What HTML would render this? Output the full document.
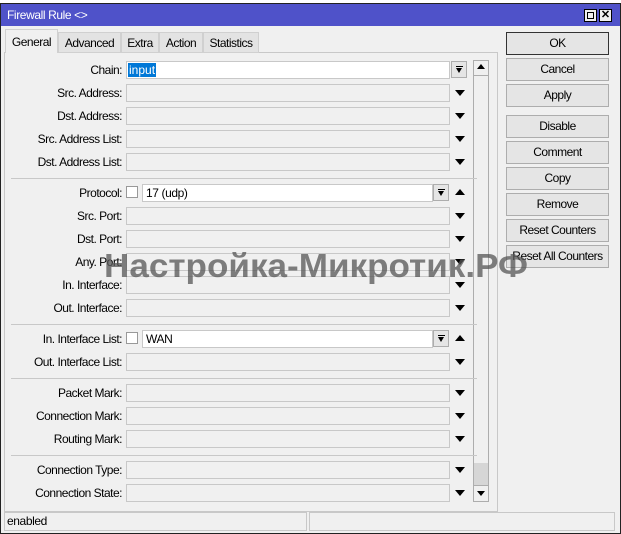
<!DOCTYPE html>
<html><head><meta charset="utf-8"><style>
*{box-sizing:border-box;margin:0;padding:0}
body{width:621px;height:534px;background:#f0f0f0;font-family:"Liberation Sans",Arial,sans-serif;font-size:12px;color:#000;position:relative;overflow:hidden}
.a{position:absolute}
.lbl{position:absolute;right:499px;text-align:right;white-space:nowrap;letter-spacing:-0.5px}
.f{position:absolute;left:126px;width:324px;height:18px;border:1px solid #c8c8c8;background:#f0f0f0}
.dn{position:absolute;left:455px;width:0;height:0;border-left:5px solid transparent;border-right:5px solid transparent;border-top:6px solid #000}
.up{position:absolute;left:455px;width:0;height:0;border-left:5px solid transparent;border-right:5px solid transparent;border-bottom:6px solid #000}
.sep{position:absolute;left:11px;width:466px;height:1px;background:#c8c8c8}
.btn{position:absolute;left:506px;width:103px;height:23px;border:1px solid #adadad;background:#e5e5e5;text-align:center;line-height:21px;letter-spacing:-0.5px}
.tab{position:absolute;top:32px;height:21px;border:1px solid #d0d0d0;background:#e3e3e3;line-height:20px;text-align:center;letter-spacing:-0.5px}
.cb{position:absolute;left:126px;width:12px;height:12px;border:1px solid #999;background:#fff}
.dd{position:absolute;width:16px;height:17px;border:1px solid #adadad;background:#e5e5e5}
.dd:before{content:"";position:absolute;left:4px;top:4px;width:7px;height:1px;background:#000}
.dd:after{content:"";position:absolute;left:4px;top:6px;width:0;height:0;border-left:3.5px solid transparent;border-right:3.5px solid transparent;border-top:5px solid #000}
</style></head><body>
<div class="a" style="left:0;top:0;width:621px;height:4px;background:#fff"></div>
<div class="a" style="left:0;top:3px;width:621px;height:531px;border:1px solid #222;background:#f0f0f0"></div>
<div class="a" style="left:1px;top:4px;width:619px;height:22px;background:#4f52c9;color:#fff;font-size:12px;line-height:22px;padding-left:6px;letter-spacing:-0.4px">Firewall Rule &lt;&gt;</div>
<div class="a" style="left:584px;top:9px;width:13px;height:13px;background:#f0f0f0;border:1px solid #000"><div class="a" style="left:2px;top:2px;width:7px;height:7px;border:1px solid #000"></div></div>
<div class="a" style="left:599px;top:9px;width:13px;height:13px;background:#f0f0f0;border:1px solid #000;font-size:11px;line-height:11px;text-align:center;font-weight:bold">✕</div>

<div class="a" style="left:4px;top:52px;width:494px;height:460px;border:1px solid #c8c8c8;background:#f0f0f0"></div>
<div class="tab" style="left:5px;top:29px;width:53px;height:24px;background:#f0f0f0;border-bottom:none;line-height:24px">General</div>
<div class="tab" style="left:58px;width:63px">Advanced</div>
<div class="tab" style="left:121px;width:38px">Extra</div>
<div class="tab" style="left:159px;width:44px">Action</div>
<div class="tab" style="left:203px;width:56px">Statistics</div>

<div class="a" style="left:473px;top:60px;width:16px;height:442px;border:1px solid #adadad;background:#f0f0f0"></div>
<div class="a" style="left:474px;top:463px;width:14px;height:22px;background:#d6d6d6"></div>
<div class="a" style="left:477px;top:64px;width:0;height:0;border-left:4px solid transparent;border-right:4px solid transparent;border-bottom:5px solid #000"></div>
<div class="a" style="left:473px;top:75px;width:16px;height:1px;background:#adadad"></div>
<div class="a" style="left:473px;top:485px;width:16px;height:1px;background:#adadad"></div>
<div class="a" style="left:477px;top:491px;width:0;height:0;border-left:4px solid transparent;border-right:4px solid transparent;border-top:5px solid #000"></div>

<div class="lbl" style="top:63px">Chain:</div>
<div class="f" style="top:61px;background:#fff;width:324px"><span style="background:#0078d7;color:#fff;padding:0 1px;position:absolute;left:1px;top:1px;line-height:14px">input</span></div>
<div class="dd" style="top:61px;left:451px"></div>
<div class="lbl" style="top:86px">Src. Address:</div><div class="f" style="top:84px"></div><div class="dn" style="top:90px"></div>
<div class="lbl" style="top:109px">Dst. Address:</div><div class="f" style="top:107px"></div><div class="dn" style="top:113px"></div>
<div class="lbl" style="top:132px">Src. Address List:</div><div class="f" style="top:130px"></div><div class="dn" style="top:136px"></div>
<div class="lbl" style="top:155px">Dst. Address List:</div><div class="f" style="top:153px"></div><div class="dn" style="top:159px"></div>
<div class="sep" style="top:178px"></div>

<div class="lbl" style="top:186px">Protocol:</div><div class="cb" style="top:186px"></div>
<div class="f" style="top:184px;left:142px;width:291px;background:#fff;padding-left:3px;line-height:16px;letter-spacing:-0.4px">17 (udp)</div>
<div class="dd" style="top:184px;left:433px"></div><div class="up" style="top:189px"></div>
<div class="lbl" style="top:209px">Src. Port:</div><div class="f" style="top:207px"></div><div class="dn" style="top:213px"></div>
<div class="lbl" style="top:232px">Dst. Port:</div><div class="f" style="top:230px"></div><div class="dn" style="top:236px"></div>
<div class="lbl" style="top:255px">Any. Port:</div><div class="f" style="top:253px"></div><div class="dn" style="top:259px"></div>
<div class="lbl" style="top:278px">In. Interface:</div><div class="f" style="top:276px"></div><div class="dn" style="top:282px"></div>
<div class="lbl" style="top:301px">Out. Interface:</div><div class="f" style="top:299px"></div><div class="dn" style="top:305px"></div>
<div class="sep" style="top:324px"></div>

<div class="lbl" style="top:332px">In. Interface List:</div><div class="cb" style="top:332px"></div>
<div class="f" style="top:330px;left:142px;width:291px;background:#fff;padding-left:3px;line-height:16px;letter-spacing:-0.4px">WAN</div>
<div class="dd" style="top:330px;left:433px"></div><div class="up" style="top:335px"></div>
<div class="lbl" style="top:355px">Out. Interface List:</div><div class="f" style="top:353px"></div><div class="dn" style="top:359px"></div>
<div class="sep" style="top:378px"></div>

<div class="lbl" style="top:386px">Packet Mark:</div><div class="f" style="top:384px"></div><div class="dn" style="top:390px"></div>
<div class="lbl" style="top:409px">Connection Mark:</div><div class="f" style="top:407px"></div><div class="dn" style="top:413px"></div>
<div class="lbl" style="top:432px">Routing Mark:</div><div class="f" style="top:430px"></div><div class="dn" style="top:436px"></div>
<div class="sep" style="top:455px"></div>
<div class="lbl" style="top:463px">Connection Type:</div><div class="f" style="top:461px"></div><div class="dn" style="top:467px"></div>
<div class="lbl" style="top:486px">Connection State:</div><div class="f" style="top:484px"></div><div class="dn" style="top:490px"></div>

<div class="btn" style="top:32px;border-color:#333">OK</div>
<div class="btn" style="top:58px">Cancel</div>
<div class="btn" style="top:84px">Apply</div>
<div class="btn" style="top:115px">Disable</div>
<div class="btn" style="top:141px">Comment</div>
<div class="btn" style="top:167px">Copy</div>
<div class="btn" style="top:193px">Remove</div>
<div class="btn" style="top:219px">Reset Counters</div>
<div class="btn" style="top:245px">Reset All Counters</div>

<div class="a" style="left:4px;top:512px;width:303px;height:19px;border:1px solid #c8c8c8;padding-left:2px;line-height:17px;letter-spacing:-0.4px">enabled</div>
<div class="a" style="left:309px;top:512px;width:306px;height:19px;border:1px solid #c8c8c8"></div>

<svg class="a" style="left:0;top:0" width="621" height="534"><text x="104" y="277" textLength="424" lengthAdjust="spacingAndGlyphs" font-family="Liberation Sans, DejaVu Sans, sans-serif" font-weight="bold" font-size="33" fill="#555" fill-opacity="0.75">Настройка-Микротик.РФ</text></svg>
</body></html>
